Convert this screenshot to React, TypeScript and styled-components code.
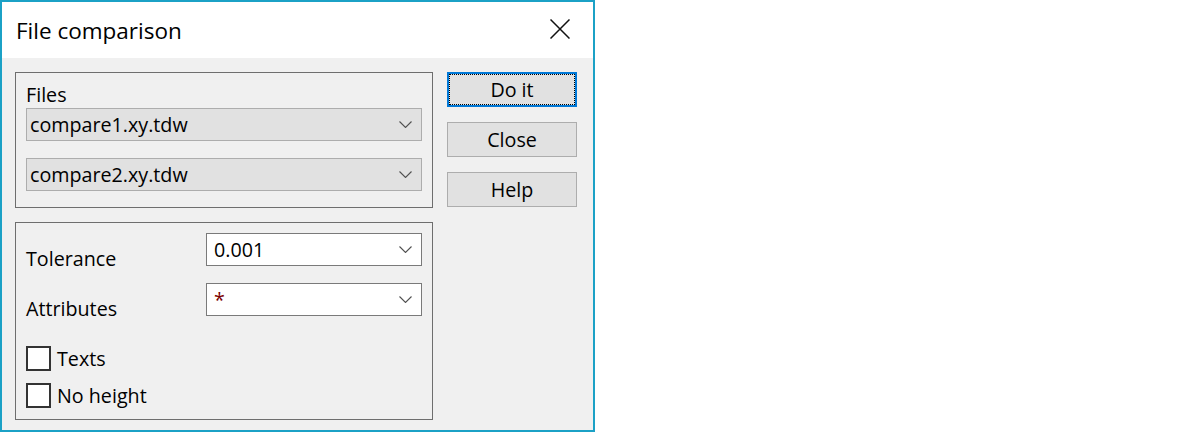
import React from "react";
import styled, { createGlobalStyle } from "styled-components";

const GlobalStyle = createGlobalStyle`
  html, body { margin: 0; padding: 0; background: #ffffff; }
  body { font-family: "Open Sans", "Noto Sans", "Liberation Sans", sans-serif; color: #000; }
  * { box-sizing: border-box; }
`;

const Window = styled.div`
  width: 595px;
  height: 432px;
  border: 2px solid #1ba1c6;
  background: #f0f0f0;
  display: flex;
  flex-direction: column;
`;

const TitleBar = styled.div`
  height: 56px;
  background: #ffffff;
  display: flex;
  align-items: center;
  justify-content: space-between;
  padding: 0 23px 0 14px;
`;

const Title = styled.span`
  font-size: 22.5px;
  line-height: 26px;
  margin-top: 1px;
`;

const CloseIcon = styled.svg`
  width: 20px;
  height: 20px;
  margin-top: -3px;
`;

const Body = styled.div`
  flex: 1;
  display: flex;
  gap: 14px;
  padding: 14px 0 0 13px;
`;

const LeftColumn = styled.div`
  width: 418px;
  display: flex;
  flex-direction: column;
  gap: 14px;
`;

const GroupBox = styled.div<{ $pad: string }>`
  border: 1px solid #6e6e6e;
  padding: ${(p) => p.$pad};
  display: flex;
  flex-direction: column;
`;

const GroupLabel = styled.div`
  font-size: 19.7px;
  line-height: 24px;
  margin-bottom: 1px;
`;

const Combo = styled.div<{ $editable?: boolean }>`
  height: 33px;
  display: flex;
  align-items: center;
  justify-content: space-between;
  background: ${(p) => (p.$editable ? "#ffffff" : "#e1e1e1")};
  border: 1px solid ${(p) => (p.$editable ? "#7a7a7a" : "#adadad")};
  padding: 0 9px 0 ${(p) => (p.$editable ? "7px" : "3px")};
  font-size: 19.7px;
`;

const ComboValue = styled.span<{ $accent?: boolean }>`
  color: ${(p) => (p.$accent ? "#7a0000" : "#000")};
  line-height: 24px;
`;

const Chevron = styled.svg`
  width: 13px;
  height: 7px;
  flex: none;
`;

const Spacer = styled.div<{ $h: number }>`
  height: ${(p) => p.$h}px;
  flex: none;
`;

const FieldRow = styled.div`
  display: grid;
  grid-template-columns: 180px 216px;
  grid-template-rows: 33px;
  align-items: start;
`;

const FieldLabel = styled.div`
  font-size: 19.7px;
  line-height: 24px;
  padding-top: 14px;
  height: 33px;
  overflow: visible;
  white-space: nowrap;
`;

const CheckRow = styled.label`
  display: flex;
  align-items: center;
  height: 25px;
  font-size: 19.7px;
`;

const CheckBox = styled.span`
  width: 25px;
  height: 25px;
  border: 2px solid #333333;
  background: #ffffff;
  flex: none;
`;

const CheckText = styled.span`
  margin-left: 6px;
  line-height: 24px;
`;

const ButtonColumn = styled.div`
  width: 130px;
  display: flex;
  flex-direction: column;
  gap: 15px;
`;

const Button = styled.button<{ $default?: boolean }>`
  height: 35px;
  width: 130px;
  padding: 0;
  font-family: inherit;
  font-size: 19.7px;
  color: #000;
  background: #e1e1e1;
  border: ${(p) => (p.$default ? "2px solid #0078d7" : "1px solid #adadad")};
  outline: ${(p) => (p.$default ? "1px dotted #000" : "none")};
  outline-offset: -3px;
  line-height: 24px;
`;

const ChevronIcon = () => (
  <Chevron viewBox="0 0 13 7">
    <polyline points="0.5,0.5 6.5,6.5 12.5,0.5" fill="none" stroke="#505050" strokeWidth="1.1" />
  </Chevron>
);

export default function App() {
  return (
    <>
      <GlobalStyle />
      <Window>
        <TitleBar>
          <Title>File comparison</Title>
          <CloseIcon viewBox="0 0 20 20">
            <path d="M0.5 0.5 L19.5 19.5 M19.5 0.5 L0.5 19.5" stroke="#111" strokeWidth="1.5" fill="none" />
          </CloseIcon>
        </TitleBar>
        <Body>
          <LeftColumn>
            <GroupBox $pad="10px 10px 16px 10px">
              <GroupLabel>Files</GroupLabel>
              <Combo>
                <ComboValue>compare1.xy.tdw</ComboValue>
                <ChevronIcon />
              </Combo>
              <Spacer $h={17} />
              <Combo>
                <ComboValue>compare2.xy.tdw</ComboValue>
                <ChevronIcon />
              </Combo>
            </GroupBox>
            <GroupBox $pad="10px 10px 11px 10px">
              <FieldRow>
                <FieldLabel>Tolerance</FieldLabel>
                <Combo $editable>
                  <ComboValue>0.001</ComboValue>
                  <ChevronIcon />
                </Combo>
              </FieldRow>
              <Spacer $h={17} />
              <FieldRow>
                <FieldLabel>Attributes</FieldLabel>
                <Combo $editable>
                  <ComboValue $accent>*</ComboValue>
                  <ChevronIcon />
                </Combo>
              </FieldRow>
              <Spacer $h={30} />
              <CheckRow>
                <CheckBox />
                <CheckText>Texts</CheckText>
              </CheckRow>
              <Spacer $h={12} />
              <CheckRow>
                <CheckBox />
                <CheckText>No height</CheckText>
              </CheckRow>
            </GroupBox>
          </LeftColumn>
          <ButtonColumn>
            <Button $default>Do it</Button>
            <Button>Close</Button>
            <Button>Help</Button>
          </ButtonColumn>
        </Body>
      </Window>
    </>
  );
}
